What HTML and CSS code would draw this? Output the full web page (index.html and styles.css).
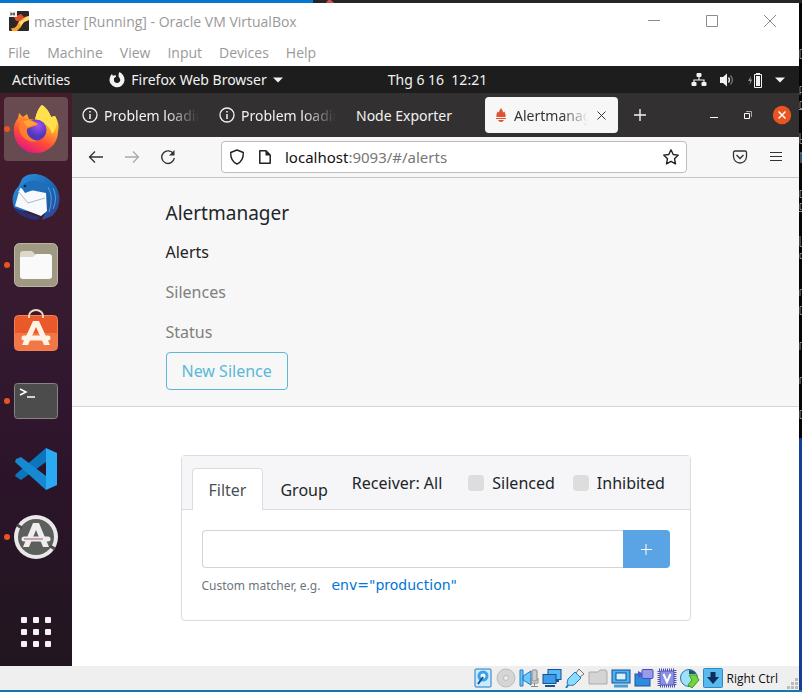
FILE: index.html
```html
<!DOCTYPE html>
<html lang="en">
<head>
<meta charset="utf-8">
<title>master [Running] - Oracle VM VirtualBox</title>
<link rel="stylesheet" href="styles.css">
</head>
<body>
<div class="desktop-top"><span class="desktop-blue"></span><svg class="desktop-mark" width="10" height="3" viewBox="0 0 10 3"><path d="M1 3 3 0H6L9 3Z" fill="#c9504f"/></svg></div>
<div class="vm-window">
  <header class="titlebar">
    <svg class="vm-logo" width="20" height="20" viewBox="0 0 20 20"><rect width="20" height="20" rx="1" fill="#2e2626"/><path d="M2 17C6 18 8 15 9 12S14 6 20 5V9C15 10 13 13 12 16L8 20H3Z" fill="#f5a52e"/><path d="M5 6 12 3 15 6 11 10 7 10Z" fill="#e0502a"/><path d="M10 11 14 9 17 6 20 5V9L15 11 12 15Z" fill="#ffd97a"/><rect width="8" height="6" fill="#f4f4f4"/><path d="M2 1.500V4.500M5 1.500V4.500M2 3H6" stroke="#333"/></svg>
    <h1 class="vm-title">master [Running] - Oracle VM VirtualBox</h1>
    <div class="win-controls">
      <button aria-label="Minimize"><svg width="12" height="12"><path d="M0 5.500H12" stroke="#8c8c8c"/></svg></button>
      <button aria-label="Maximize"><svg width="12" height="12"><path d="M.5.500H11.500V11.500H.5Z" fill="none" stroke="#8c8c8c"/></svg></button>
      <button aria-label="Close"><svg width="12" height="12"><path d="M0 0 12 12M12 0 0 12" stroke="#8c8c8c"/></svg></button>
    </div>
  </header>
  <nav class="vm-menu" aria-label="Virtual machine">
    <button>File</button><button>Machine</button><button>View</button><button>Input</button><button>Devices</button><button>Help</button>
  </nav>
  <div class="gnome-bar">
    <button class="activities">Activities</button>
    <button class="app-menu">
      <svg width="16" height="16" viewBox="0 0 16 16"><path d="M10.500 0C14 2 15.700 5 15.500 8.500A7.500 7.300 0 1 1 .8 6C1.200 4.200 2 3 3 2L3.800 3.800C4.600 3.200 5.500 3 6.500 3.200L7.200 4.500 5.200 6C4.200 9 6 11 8 11 11 11 12.200 8 10.500 6 9.200 4.500 9.200 2 10.500 0Z" fill="#f2f2f2"/></svg>
      <span>Firefox Web Browser</span>
      <svg width="10" height="6" viewBox="0 0 10 6"><path d="M0 .5H10L5 5.500Z" fill="#f2f2f2"/></svg>
    </button>
    <time class="clock">Thg 6 16&nbsp; 12:21</time>
    <button class="tray" aria-label="System menu">
      <svg width="16" height="16" viewBox="0 0 16 16"><path d="M8 4V8M3 12V8H13V12" fill="none" stroke="#f2f2f2" stroke-width="1.200"/><rect x="5.500" y="1" width="5" height="4" rx="1" fill="#f2f2f2"/><rect x=".5" y="10" width="5" height="4" rx="1" fill="#f2f2f2"/><rect x="10.500" y="10" width="5" height="4" rx="1" fill="#f2f2f2"/></svg>
      <svg width="16" height="16" viewBox="0 0 16 16"><path d="M1 5H4L8 1.500V14.500L4 11H1Z" fill="#f2f2f2"/><path d="M9.500 5.500Q11.500 8 9.500 10.500" fill="none" stroke="#f2f2f2" stroke-width="1.300"/><path d="M11.500 3.500Q15.500 8 11.500 12.500" fill="none" stroke="#777" stroke-width="1.300"/></svg>
      <svg width="16" height="16" viewBox="0 0 16 16"><path d="M4 4 1 9H3.200L2.500 13 5.200 7.500H3.300Z" fill="#999"/><path d="M7.500 2.500H14.500V15.500H7.500Z" fill="none" stroke="#f2f2f2"/><path d="M9 1H13V2H9ZM9 4H13V14H9Z" fill="#f2f2f2"/></svg>
      <svg width="10" height="6" viewBox="0 0 10 6"><path d="M0 .5H10L5 5.500Z" fill="#f2f2f2"/></svg>
    </button>
  </div>
  <div class="guest">
    <nav class="dock" aria-label="Dock">
      <button class="tile running current" aria-label="Firefox">
        <svg width="48" height="48" viewBox="0 0 48 48"><defs><linearGradient id="fx" x1=".8" y1="0" x2=".3" y2="1"><stop offset="0" stop-color="#fff44f"/><stop offset=".35" stop-color="#ffb02e"/><stop offset=".7" stop-color="#ff4a38"/><stop offset="1" stop-color="#e31587"/></linearGradient><radialGradient id="orb" cx=".6" cy=".3"><stop offset="0" stop-color="#a050f5"/><stop offset="1" stop-color="#5038b8"/></radialGradient></defs><path d="M30 0C36 4 38 9 39 12L43 11C47 17 47 22 46 27A22 21 0 0 1 2 27C1 20 4 16 6 13L7 8 11 12 15 9 17 14 23 15C24 10 26 3 30 0Z" fill="url(#fx)"/><path d="M30 0C36 4 38 9 39 12L43 11C46 17 45 24 40 29 38 20 30 16 23 15 24 10 26 3 30 0Z" fill="#ffe14b"/><circle cx="24" cy="25" r="10.500" fill="url(#orb)"/><path d="M8 13 17 14 23 17 26 19C24 22 19 21 15 24 14 31 20 35 26 36 18 39 8 33 7 23Z" fill="#ff7d2c"/><path d="M11 16 17 15 26 19 15 22Z" fill="#ffa436"/></svg>
      </button>
      <button class="tile" aria-label="Thunderbird">
        <svg width="48" height="48" viewBox="0 0 48 48"><defs><linearGradient id="tb" x1="0" y1="0" x2="1" y2="1"><stop offset="0" stop-color="#2d95e8"/><stop offset=".6" stop-color="#1b64ad"/><stop offset="1" stop-color="#3b3d93"/></linearGradient></defs><path d="M12 4C18-1 31 0 39 8 49 16 51 33 40 43L30 47 33 40 3 37C-1 28 0 20 6 14 9 10 9 6 12 4Z" fill="url(#tb)"/><path d="M8 15 34 20 35 38 29 43 3 33Z" fill="#f7f9fc"/><path d="M6 18 16 30 33 25" fill="none" stroke="#aebac8"/><path d="M9 14C14 8 24 4 34 13L34 19 24 16 13 20 11 17Z" fill="#1e6eb9"/><path d="M1 34 15 40 28 44 25 47C14 46 6 42 1 34Z" fill="#2c2e72"/><circle cx="13" cy="13" r="1.300" fill="#0b2c50"/><path d="M36 14Q42 24 37 39M41 15Q46 25 41 36" fill="none" stroke="#4ba5e8"/></svg>
      </button>
      <button class="tile running" aria-label="Files">
        <svg width="48" height="48" viewBox="0 0 48 48"><rect x="2.500" y="2.500" width="43" height="43" rx="5" fill="#9f9984" stroke="#bbb6a4"/><path d="M8 13Q8 10 11 10H20L23 13V18H8Z" fill="#ddd8ca"/><path d="M8 16H21L24 13H37Q40 13 40 16V35Q40 38 37 38H11Q8 38 8 35Z" fill="#fafafa"/></svg>
      </button>
      <button class="tile" aria-label="Ubuntu Software">
        <svg width="48" height="48" viewBox="0 0 48 48"><path d="M17 9V7A7 6 0 0 1 31 7V9" fill="none" stroke="#f3d8bd" stroke-width="2"/><rect x="2.500" y="6.500" width="43" height="35" rx="4" fill="#e9592a" stroke="#f48155"/><path d="M3 24H45V38Q45 41 42 41H6Q3 41 3 38Z" fill="#f17747"/><path d="M17 9V6M31 9V6" stroke="#f3d8bd" stroke-width="2"/><path d="M21 12H27L38 36H32L24 18 16 36H10Z" fill="#fff3e5"/><path d="M12 29H36" stroke="#fff3e5" stroke-width="5" stroke-linecap="round"/></svg>
      </button>
      <button class="tile running" aria-label="Terminal">
        <svg width="48" height="48" viewBox="0 0 48 48"><rect x="2.500" y="6.500" width="43" height="35" rx="3" fill="#4c4c4c" stroke="#858585"/><path d="M8 12 14 15 8 18M15 20H23" fill="none" stroke="#fff" stroke-width="1.500"/></svg>
      </button>
      <button class="tile" aria-label="Visual Studio Code">
        <svg width="48" height="48" viewBox="0 0 48 48"><path d="M4 29 34 3V17L9 35 3 31Z" fill="#0b76bd"/><path d="M4 14 9 12 34 31V45L3 17Z" fill="#1689d0"/><path d="M34 3 45 8V40L34 45Z" fill="#2aaaf2"/></svg>
      </button>
      <button class="tile running" aria-label="Software Updater">
        <svg width="48" height="48" viewBox="0 0 48 48"><circle cx="24" cy="24" r="22" fill="#e9e9e9"/><circle cx="24" cy="24" r="18" fill="#5d5f5c"/><path d="M5 12 10 15M43 36 38 33" stroke="#4b4b4b" stroke-width="3"/><path d="M21 10H27L37 34H31L24 17 17 34H11Z" fill="#eee"/><path d="M12 26H36" stroke="#eee" stroke-width="5" stroke-linecap="round"/><path d="M12 26H31" stroke="#9c5780"/></svg>
      </button>
      <button class="tile show-apps" aria-label="Show Applications">
        <svg width="30" height="30" viewBox="0 0 30 30" fill="#f6f1f4"><rect width="6" height="6" rx="1"/><rect x="12" width="6" height="6" rx="1"/><rect x="24" width="6" height="6" rx="1"/><rect y="12" width="6" height="6" rx="1"/><rect x="12" y="12" width="6" height="6" rx="1"/><rect x="24" y="12" width="6" height="6" rx="1"/><rect y="24" width="6" height="6" rx="1"/><rect x="12" y="24" width="6" height="6" rx="1"/><rect x="24" y="24" width="6" height="6" rx="1"/></svg>
      </button>
    </nav>
    <div class="browser">
      <div class="tabstrip">
        <button class="tab"><svg width="16" height="16" viewBox="0 0 16 16"><circle cx="8" cy="8" r="7" fill="none" stroke="#f2f2f2" stroke-width="1.300"/><path d="M8 7V12M8 4V5.500" stroke="#f2f2f2" stroke-width="1.500"/></svg><span class="tab-label fade">Problem loading</span></button>
        <button class="tab"><svg width="16" height="16" viewBox="0 0 16 16"><circle cx="8" cy="8" r="7" fill="none" stroke="#f2f2f2" stroke-width="1.300"/><path d="M8 7V12M8 4V5.500" stroke="#f2f2f2" stroke-width="1.500"/></svg><span class="tab-label fade">Problem loading</span></button>
        <button class="tab"><span class="tab-label">Node Exporter</span></button>
        <div class="tab active"><svg width="16" height="16" viewBox="0 0 16 16"><path d="M8 1C9 3 10 3.500 10 5.500L11.500 4.500C12 6.500 13 7 12.500 10H3.500C3 7 4 6.500 4.500 4.500L6 5.500C6 3.500 7 3 8 1ZM3 11H13V12H3ZM5 13H11Q10 15 8 15T5 13Z" fill="#de5430"/></svg><span class="tab-label fade">Alertmanager</span><button class="tab-close" aria-label="Close tab"><svg width="9" height="9"><path d="M.5.500 8.500 8.500M8.500.500.5 8.500" stroke="#333"/></svg></button></div>
        <button class="new-tab" aria-label="New tab"><svg width="12" height="12"><path d="M6 0V12M0 6H12" stroke="#f2f2f2" stroke-width="1.400"/></svg></button>
        <div class="ff-controls">
          <button aria-label="Minimize"><svg width="10" height="10"><path d="M1 7.500H9" stroke="#fff"/></svg></button>
          <button aria-label="Restore"><svg width="8" height="8"><path d="M.5 2.500H5.500V7.500H.5Z" fill="none" stroke="#fff"/><path d="M2 .5H7.500V6" fill="none" stroke="#aaa"/></svg></button>
          <button aria-label="Close window"><svg width="20" height="20"><circle cx="10" cy="10" r="9.200" fill="#e95420"/><path d="M6.500 6.500 13.500 13.500M13.500 6.500 6.500 13.500" stroke="#fff" stroke-width="1.500"/></svg></button>
        </div>
      </div>
      <div class="toolbar">
        <div class="tool-group">
          <button aria-label="Back"><svg width="16" height="16" viewBox="0 0 16 16"><path d="M15 8H1.500M7 2.500 1.500 8 7 13.500" fill="none" stroke="#333" stroke-width="1.300"/></svg></button>
          <button aria-label="Forward"><svg width="16" height="16" viewBox="0 0 16 16"><path d="M1 8H14.500M9 2.500 14.500 8 9 13.500" fill="none" stroke="#aaa" stroke-width="1.300"/></svg></button>
          <button aria-label="Reload"><svg width="16" height="16" viewBox="0 0 16 16"><path d="M13.500 5A6.300 6.300 0 1 0 14.300 9" fill="none" stroke="#333" stroke-width="1.400"/><path d="M14.500 1V6.500H9Z" fill="#333"/></svg></button>
        </div>
        <div class="urlbar">
          <svg width="16" height="16" viewBox="0 0 16 16"><path d="M8 1 14.300 3.500C14.500 9 12.500 13 8 15 3.500 13 1.500 9 1.700 3.500Z" fill="none" stroke="#222" stroke-width="1.400" stroke-linejoin="round"/></svg>
          <svg width="16" height="16" viewBox="0 0 16 16"><path d="M2.800 1.800H9L13.200 6V14.200H2.800Z" fill="none" stroke="#222" stroke-width="1.500" stroke-linejoin="round"/><path d="M8.500 1.500V6.500H13.500Z" fill="#222"/></svg>
          <a class="address" href="#/alerts"><b>localhost</b>:9093/#/alerts</a>
          <button aria-label="Bookmark"><svg width="16" height="16" viewBox="0 0 16 16"><path d="M8 .8 10.200 5.500 15.300 6.100 11.500 9.700 12.500 14.900 8 12.300 3.500 14.900 4.500 9.700.7 6.100 5.800 5.500Z" fill="none" stroke="#222" stroke-width="1.400" stroke-linejoin="round"/></svg></button>
        </div>
        <div class="tool-group">
          <button aria-label="Save to Pocket"><svg width="16" height="16" viewBox="0 0 16 16"><path d="M3 2H13Q14.500 2 14.500 3.500V7.500A6.500 6.500 0 0 1 1.500 7.500V3.500Q1.500 2 3 2Z" fill="none" stroke="#333" stroke-width="1.300"/><path d="M4.500 6 8 9.500 11.500 6" fill="none" stroke="#333" stroke-width="1.400"/></svg></button>
          <button aria-label="Application menu"><svg width="16" height="16"><path d="M2 3.500H14M2 7.500H14M2 11.500H14" stroke="#333"/></svg></button>
        </div>
      </div>
      <div class="page">
        <header class="site-header">
          <nav class="site-nav">
            <a class="brand" href="#">Alertmanager</a>
            <a class="nav-link selected" href="#/alerts">Alerts</a>
            <a class="nav-link" href="#/silences">Silences</a>
            <a class="nav-link" href="#/status">Status</a>
            <button class="new-silence">New Silence</button>
          </nav>
        </header>
        <main class="card">
          <div class="card-head">
            <button class="card-tab chosen">Filter</button>
            <button class="card-tab">Group</button>
            <div class="options">
              <button class="receiver">Receiver: All</button>
              <label class="check"><input type="checkbox">Silenced</label>
              <label class="check"><input type="checkbox">Inhibited</label>
            </div>
          </div>
          <form class="card-body">
            <div class="matcher"><input type="text" aria-label="Custom matcher"><button type="button" aria-label="Add matcher"><svg width="12" height="12"><path d="M6 1V12M1 6.500H12" stroke="#fff"/></svg></button></div>
            <p class="hint">Custom matcher, e.g. <a href="#">env="production"</a></p>
          </form>
        </main>
      </div>
    </div>
  </div>
  <footer class="vm-status">
    <svg width="20" height="20" viewBox="0 0 20 20"><rect x="2" y="1" width="16" height="18" rx="1" fill="#c9edff" stroke="#2478c4"/><circle cx="10" cy="8" r="5.500" fill="#3e9fe9"/><circle cx="10" cy="8" r="2.500" fill="#e9faff"/><path d="M10 9 5 16" stroke="#115294" stroke-width="2"/></svg>
    <svg width="20" height="20" viewBox="0 0 20 20"><circle cx="10" cy="10" r="9" fill="#d5d5d5" stroke="#bbb"/><circle cx="10" cy="10" r="2.500" fill="#eee" stroke="#bbb"/></svg>
    <svg width="20" height="20" viewBox="0 0 20 20"><path d="M1 2H4V18H1ZM4 8 12 3V17L4 12Z" fill="#68c8fa" stroke="#2478c4"/><rect x="13" y="2" width="5" height="11" rx="1" fill="#ccc" stroke="#888"/><path d="M12 10V15H19V10M15.500 15V19M12 18.500H19" fill="none" stroke="#888"/></svg>
    <svg width="20" height="20" viewBox="0 0 20 20"><rect x="6" y="1.500" width="13" height="10" fill="#55bafa" stroke="#16538c"/><path d="M10 13H17" stroke="#16538c" stroke-width="2"/><rect x="1" y="6.500" width="13" height="9" fill="#3c9bea" stroke="#16538c"/><path d="M3 18H13" stroke="#16538c" stroke-width="2"/></svg>
    <svg width="20" height="20" viewBox="0 0 20 20"><path d="M14 1 19 6 15 9 11 5Z" fill="#eee" stroke="#777"/><path d="M10 4 16 10 9 17Q5 18 3 17T3 11Z" fill="#8bdcff" stroke="#2478c4"/><path d="M3 17 1 20" stroke="#2478c4" stroke-width="2"/></svg>
    <svg width="20" height="20" viewBox="0 0 20 20"><path d="M1 16V4H10L12 2H18L19 4V16Z" fill="#d4d4d4" stroke="#aaa"/></svg>
    <svg width="20" height="20" viewBox="0 0 20 20"><rect x="1" y="2" width="18" height="13" fill="#48b2f4" stroke="#174f90"/><rect x="5" y="5" width="10" height="7" fill="#d5f3ff" stroke="#174f90"/><path d="M3 18H17" stroke="#4a9dd7" stroke-width="3"/></svg>
    <svg width="20" height="20" viewBox="0 0 20 20"><rect x="1" y="6" width="15" height="12" fill="#2c8ce0" stroke="#17599d"/><rect x="8" y="1.500" width="11" height="9" rx="1" fill="#969bea" stroke="#4a4bb8"/><path d="M4 3 8 5V8L4 10Z" fill="#5557c4"/></svg>
    <svg width="20" height="20" viewBox="0 0 20 20"><rect x="2" y="2" width="16" height="16" fill="none" stroke="#4e52b4" stroke-width="3" stroke-dasharray="1 1"/><rect x="3" y="3" width="14" height="14" rx="1" fill="#8a92df" stroke="#5158b9"/><path d="M6.500 6 10 14 13.500 6" fill="none" stroke="#fff" stroke-width="2"/></svg>
    <svg width="20" height="20" viewBox="0 0 20 20"><circle cx="9" cy="10" r="8.500" fill="#9ee1fa" stroke="#2478a4"/><path d="M9 6V2Q14 2 16 6Z" fill="#24536c"/><path d="M9 7H16L19 12 12 20 8 17 12 12Z" fill="#75d43a" stroke="#3d9b24"/></svg>
    <svg width="20" height="20" viewBox="0 0 20 20"><rect x=".5" y=".5" width="19" height="19" rx="1" fill="#58b9ed" stroke="#3188c5"/><path d="M7.500 4H12.500V9H16L10 16 4 9H7.500Z" fill="#0b2d60"/></svg>
    <span class="host-key">Right Ctrl</span>
    <svg class="grip" width="12" height="12" fill="#bbb"><path d="M8 0h3v3h-3zM4 4h3v3h-3zM8 4h3v3h-3zM0 8h3v3h-3zM4 8h3v3h-3zM8 8h3v3h-3z"/></svg>
  </footer>
</div>
<div class="desktop-edge"><svg width="3" height="420" viewBox="0 0 3 420" fill="none" stroke="#8d8173"><path d="M3 46.500H1V55.500H3M1 92V83.500H3M1 89.500H3M3 98.500H1V105.500H3M1 130V140.500H3M1 136.500H3M3 187.500H1V194.500H3M3 200.500H1V206.500H3M1 233V243.500H3M3 250.500H1V255.500H3M1 293V286.500H3M3 303.500H1V311.500H3M1 347V339.500H3M1 381V374.500H3M3 407.500H1V415.500H3"/><path d="M0 106.500H3M0 208.500H3" stroke="#7ba4c7"/><path d="M1 150H3M2 150V160" stroke="#71a1d2"/></svg></div>
<div class="desktop-bottom"></div>
</body>
</html>
```
FILE: styles.css
```css
* { box-sizing: border-box; }

body {
  margin: 0;
  min-height: 100vh;
  display: grid;
  grid-template-columns: minmax(0, 1fr) 3px;
  grid-template-rows: 3px 1fr 2px;
  font-family: "Noto Sans", "Open Sans", sans-serif;
  font-size: 15px;
  color: #212529;
}

button {
  margin: 0;
  padding: 0;
  border: 0;
  background: none;
  font: inherit;
  color: inherit;
}

a { color: inherit; text-decoration: none; }
svg { display: block; flex: none; }

.desktop-top { grid-column: 1 / -1; display: flex; background: #262626; }
.desktop-blue { width: 39%; background: #0878cf; }
.desktop-mark { margin-left: 12px; }
.desktop-edge { background: linear-gradient(#050505 0 435px, #123f91 435px); }
.desktop-bottom { grid-column: 1 / -1; background: #1675ad; }

.vm-window { display: flex; flex-direction: column; background: #fff; }

/* VirtualBox title and menu */
.titlebar {
  display: flex;
  align-items: center;
  height: 36px;
  padding-left: 9px;
  gap: 5px;
}
.vm-title {
  flex: 1;
  margin: 0;
  font: 400 14px "Open Sans", sans-serif;
  color: #999;
  white-space: nowrap;
}
.win-controls { display: flex; align-self: stretch; }
.win-controls button { width: 58px; display: grid; place-items: center; }
.vm-menu {
  display: flex;
  align-items: center;
  gap: 17px;
  height: 27px;
  padding: 0 8px;
  font: 14px "Open Sans", sans-serif;
  color: #999;
}

/* GNOME top bar */
.gnome-bar {
  display: flex;
  align-items: center;
  height: 27px;
  padding: 0 14px 0 12px;
  background: #1d1d1d;
  color: #f2f2f2;
  font-size: 14px;
  white-space: nowrap;
}
.app-menu { display: flex; align-items: center; gap: 6px; margin-left: 39px; }
.clock { margin-left: 105px; }
.tray { display: flex; align-items: center; gap: 12px; margin-left: auto; }

.guest { flex: 1; display: flex; }

/* Dock */
.dock {
  flex: none;
  display: flex;
  flex-direction: column;
  gap: 4px;
  width: 72px;
  padding: 4px 4px 2px;
  background: linear-gradient(#451c2a, #351a30 40%, #2c142a 65%, #21161f);
}
.tile {
  position: relative;
  display: grid;
  place-items: center;
  height: 64px;
  border-radius: 4px;
}
.current { background: #684a51; }
.running::before {
  content: "";
  position: absolute;
  left: 0;
  top: 29px;
  width: 6px;
  height: 6px;
  border-radius: 50%;
  background: #e95420;
}
.show-apps { margin-top: auto; }

/* Browser chrome */
.browser { flex: 1; min-width: 0; display: flex; flex-direction: column; }
.tabstrip {
  display: flex;
  align-items: center;
  gap: 4px;
  height: 44px;
  padding: 0 6px 0 2px;
  background: #323031;
  color: #f2f2f2;
  font-size: 14px;
}
.tab {
  flex: 0 1 133px;
  min-width: 0;
  height: 36px;
  display: flex;
  align-items: center;
  gap: 6px;
  padding: 0 8px;
  border-radius: 4px;
}
.tab-label { flex: 1; overflow: hidden; white-space: nowrap; text-align: left; }
.fade {
  -webkit-mask-image: linear-gradient(90deg, #000 65%, transparent);
  mask-image: linear-gradient(90deg, #000 65%, transparent);
}
.active { gap: 5px; background: #f7f7f7; color: #333; }
.tab-close { padding: 4px; }
.new-tab { width: 36px; height: 36px; display: grid; place-items: center; }
.ff-controls { display: flex; margin-left: auto; }
.ff-controls button { width: 34px; height: 36px; display: grid; place-items: center; }
.ff-controls button:last-child { width: 22px; margin-left: 6px; }

.toolbar {
  display: flex;
  align-items: center;
  gap: 35px;
  height: 41px;
  padding: 0 5px 0 6px;
  background: #f7f7f7;
  border-bottom: 1px solid #c6c6c6;
}
.tool-group { display: flex; }
.tool-group button { width: 36px; height: 36px; display: grid; place-items: center; }
.urlbar {
  flex: 1;
  min-width: 0;
  display: flex;
  align-items: center;
  gap: 12px;
  height: 32px;
  padding: 0 7px;
  background: #fff;
  border: 1px solid #bdbdbd;
  border-radius: 4px;
}
.address { flex: 1; color: #777; }
.address b { font-weight: 400; color: #111; }

/* Alertmanager page */
.page { flex: 1; background: #fff; font-size: 16px; }
.site-header { padding: 16px; background: #f7f7f7; border-bottom: 1px solid #d6d6d6; }
.site-nav {
  display: flex;
  flex-direction: column;
  align-items: flex-start;
  max-width: 540px;
  margin: 0 auto;
}
.brand { height: 38px; line-height: 38px; font-size: 19px; }
.nav-link { height: 40px; line-height: 40px; color: #808080; }
.selected { color: #222; }
.new-silence {
  height: 38px;
  padding: 0 15px;
  border: 1px solid #5bb8d8;
  border-radius: 4px;
  color: #5bb8d8;
}
.card {
  max-width: 510px;
  margin: 48px auto 24px;
  border: 1px solid #dcdcdc;
  border-radius: 4px;
}
.card-head {
  display: flex;
  align-items: flex-end;
  height: 54px;
  padding-left: 10px;
  background: #f6f6f8;
  border-bottom: 1px solid #dcdcdc;
}
.card-tab {
  height: 42px;
  margin-bottom: -1px;
  padding: 0 16px;
  border: 1px solid transparent;
  border-bottom: 0;
  border-radius: 4px 4px 0 0;
}
.chosen { background: #fff; border-color: #dcdcdc; color: #495057; }
.options {
  flex: 1;
  display: flex;
  align-items: center;
  align-self: stretch;
  gap: 18px;
  padding-left: 7px;
}
.receiver { margin-right: 8px; }
.check { display: flex; align-items: center; gap: 8px; }
.check input {
  appearance: none;
  width: 16px;
  height: 16px;
  margin: 0;
  border-radius: 4px;
  background: #ddd;
}
.card-body { padding: 20px; }
.matcher { display: flex; height: 38px; }
.matcher input {
  flex: 1;
  min-width: 0;
  padding: 0 12px;
  border: 1px solid #d4d4d4;
  border-right: 0;
  border-radius: 4px 0 0 4px;
  font: inherit;
}
.matcher button {
  width: 47px;
  display: grid;
  place-items: center;
  background: #5aa4e6;
  border-radius: 0 4px 4px 0;
}
.hint { margin: 6px 0 2px; line-height: 24px; font-size: 12px; color: #6c757d; }
.hint a { margin-left: 8px; font: 14px "DejaVu Sans", sans-serif; color: #0275d8; }

/* VirtualBox status bar */
.vm-status {
  display: flex;
  align-items: center;
  justify-content: flex-end;
  gap: 3px;
  height: 24px;
  background: #efefef;
}
.host-key { margin-left: 1px; font: 12px "Open Sans", sans-serif; color: #111; white-space: nowrap; }
.grip { align-self: flex-end; margin-left: 6px; }
```
